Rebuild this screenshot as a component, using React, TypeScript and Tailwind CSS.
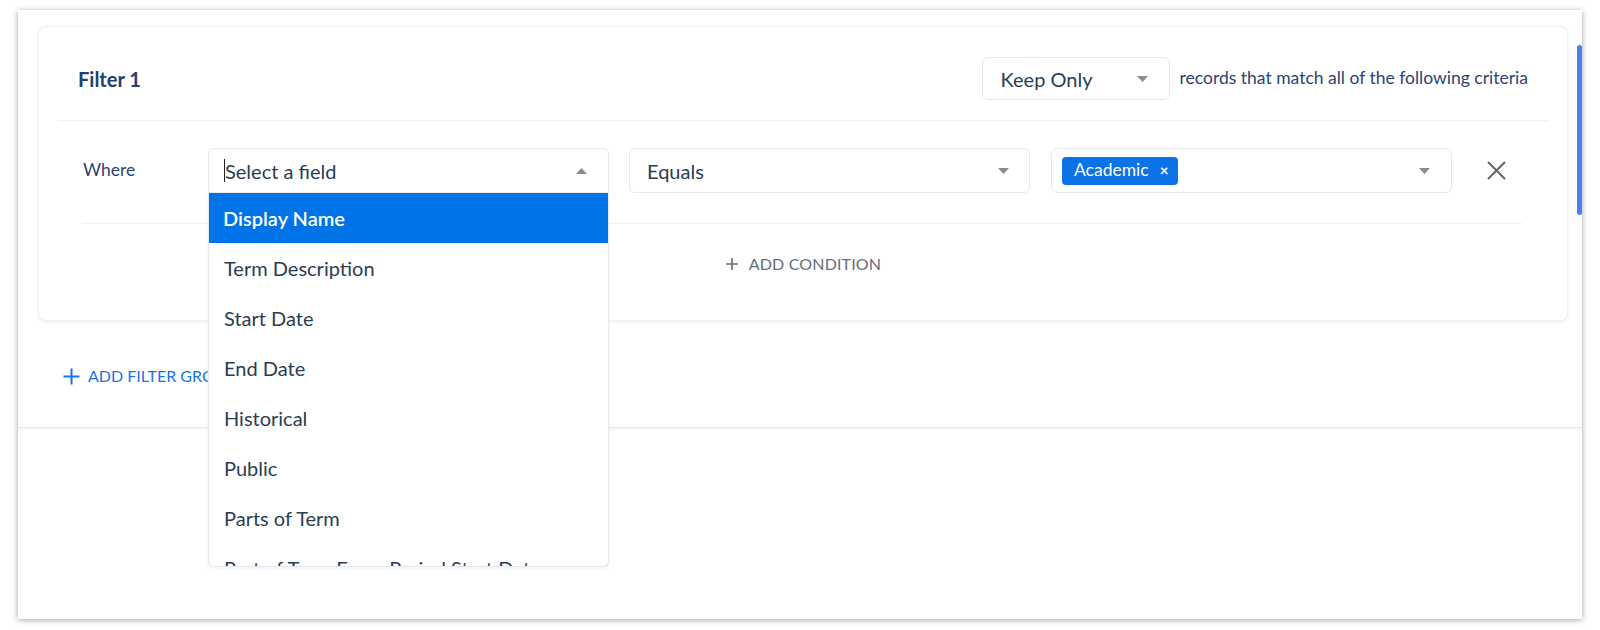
import React from 'react';

const Caret: React.FC<{ up?: boolean }> = ({ up }) => (
  <svg width="11" height="6" viewBox="0 0 11 6" className="shrink-0">
    {up ? <path d="M0 6 L5.5 0 L11 6 Z" fill="#8c8c8c" /> : <path d="M0 0 L11 0 L5.5 6 Z" fill="#8c8c8c" />}
  </svg>
);

const fields = [
  'Display Name',
  'Term Description',
  'Start Date',
  'End Date',
  'Historical',
  'Public',
  'Parts of Term',
  'Part of Term Exam Period Start Date',
];

export default function App() {
  return (
    <div className="w-[1600px] h-[630px] bg-white pt-[10px] pl-[18px] font-['Lato',sans-serif]">
      <div className="relative w-[1564px] h-[609px] bg-white shadow-[0_1px_6px_rgba(0,0,0,0.35)]">
        {/* filter section */}
        <div className="h-[418px] border-b border-[#e8e8e8] shadow-[0_1px_2px_rgba(0,0,0,0.06)] pt-[16px] pl-[20px]">
          <div className="w-[1530px] rounded-[8px] border border-[#eef1f5] bg-white shadow-[0_1px_3px_rgba(0,0,0,0.08)]">
            <div className="mx-[19px] flex items-center justify-between border-b border-[#eef1f4] pt-[30px] pb-[20px] px-[20px]">
              <h3 className="text-[20px] leading-[24px] font-bold text-[#22406f]">Filter 1</h3>
              <div className="flex items-center">
                <div className="w-[188px] h-[43px] rounded-[6px] border border-[#e4e9f0] flex items-center justify-between pl-[18px] pr-[21px]">
                  <span className="text-[20px] text-[#2b3d52]">Keep Only</span>
                  <Caret />
                </div>
                <span className="ml-[10px] text-[17.5px] text-[#2b4473]">records that match all of the following criteria</span>
              </div>
            </div>

            <div className="ml-[43px] mr-[45px] flex items-center border-b border-[#eef1f4] pt-[27px] pb-[30px]">
              <span className="w-[126px] pl-[1px] text-[17.5px] text-[#2b4473]">Where</span>
              <div className="relative w-[401px]">
                <div className="h-[45px] rounded-t-[6px] border border-[#e4e9f0] flex items-center justify-between pl-[16px] pr-[21px]">
                  <span className="relative text-[20px] text-[#2b3d52]">
                    <span className="absolute -left-[1px] top-[3px] w-[1px] h-[23px] bg-[#222]"></span>
                    Select a field
                  </span>
                  <Caret up />
                </div>
                <div className="absolute left-0 right-0 top-[45px] z-10 h-[374px] overflow-hidden rounded-b-[6px] border border-t-0 border-[#e4e9f0] bg-white shadow-[0_2px_4px_rgba(0,0,0,0.05)]">
                  {fields.map((f, i) => (
                    <div
                      key={f}
                      className={
                        i === 0
                          ? 'h-[50px] flex items-center px-[15px] text-[20px] font-semibold text-white bg-[#0073e6] -mx-[1px]'
                          : 'h-[50px] flex items-center px-[15px] text-[20px] text-[#2b3d52] whitespace-nowrap'
                      }
                    >
                      {f}
                    </div>
                  ))}
                </div>
              </div>
              <div className="ml-[20px] w-[401px] h-[45px] rounded-[6px] border border-[#e4e9f0] flex items-center justify-between pl-[17px] pr-[20px]">
                <span className="text-[20px] text-[#2b3d52]">Equals</span>
                <Caret />
              </div>
              <div className="ml-[21px] w-[401px] h-[45px] rounded-[6px] border border-[#e4e9f0] flex items-center justify-between pl-[10px] pr-[21px]">
                <span className="h-[28px] rounded-[4px] bg-[#0b72e7] flex items-center pl-[12px] pr-[10px] text-white text-[17.5px]">
                  Academic
                  <span className="ml-[11px] text-[15px] font-bold leading-none">×</span>
                </span>
                <Caret />
              </div>
              <button className="ml-[35px]">
                <svg width="19" height="19" viewBox="0 0 19 19">
                  <path d="M1.5 1.5 L17.5 17.5 M17.5 1.5 L1.5 17.5" stroke="#5f6368" strokeWidth="1.9" strokeLinecap="round" />
                </svg>
              </button>
            </div>

            <div className="h-[96px] pt-[30px] flex justify-center">
              <div className="flex items-center h-[20px] text-[#636e7b]">
                <svg width="14" height="14" viewBox="0 0 14 14">
                  <path d="M7 1 V13 M1 7 H13" stroke="#636e7b" strokeWidth="1.6" />
                </svg>
                <span className="ml-[10px] text-[16px] tracking-[0.01em]">ADD CONDITION</span>
              </div>
            </div>
          </div>

          <div className="mt-[45px] ml-[25px] flex items-center h-[20px] text-[#1a73e8]">
            <svg width="17" height="17" viewBox="0 0 17 17">
              <path d="M8.5 0.5 V16.5 M0.5 8.5 H16.5" stroke="#1a73e8" strokeWidth="2" />
            </svg>
            <span className="ml-[8px] text-[16px]">ADD FILTER GROUP</span>
          </div>
        </div>

        <div className="absolute right-0 top-[35px] w-[5px] h-[170px] rounded-full bg-[#4a7ff5]"></div>
      </div>
    </div>
  );
}
